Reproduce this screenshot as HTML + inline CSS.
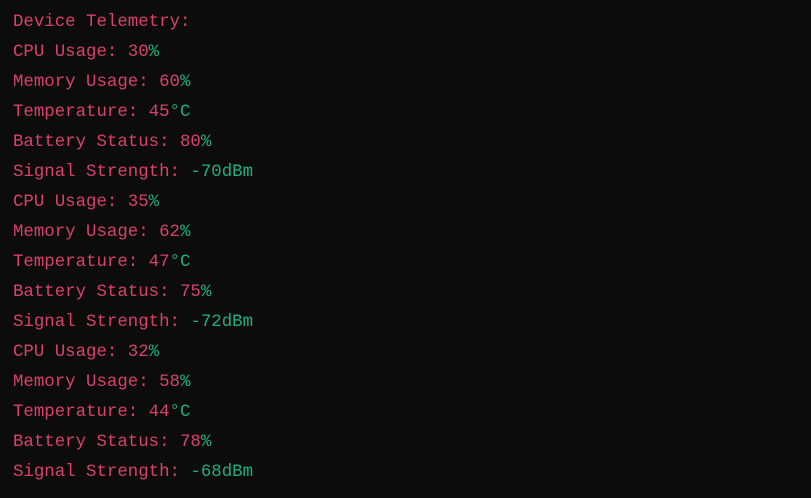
<!DOCTYPE html>
<html><head><meta charset="utf-8"><style>
html,body{margin:0;padding:0;background:#0c0c0c;width:811px;height:498px;overflow:hidden}
.w{position:absolute;left:13px;top:8px;font-family:"Liberation Mono",monospace;font-size:17.4px;line-height:30px;color:#d9406e;white-space:pre}
.g{color:#1fae7d}
</style></head><body><div class="w">Device Telemetry:
CPU Usage: 30<span class="g">%</span>
Memory Usage: 60<span class="g">%</span>
Temperature: 45<span class="g">°C</span>
Battery Status: 80<span class="g">%</span>
Signal Strength: <span class="g">-70dBm</span>
CPU Usage: 35<span class="g">%</span>
Memory Usage: 62<span class="g">%</span>
Temperature: 47<span class="g">°C</span>
Battery Status: 75<span class="g">%</span>
Signal Strength: <span class="g">-72dBm</span>
CPU Usage: 32<span class="g">%</span>
Memory Usage: 58<span class="g">%</span>
Temperature: 44<span class="g">°C</span>
Battery Status: 78<span class="g">%</span>
Signal Strength: <span class="g">-68dBm</span></div></body></html>
